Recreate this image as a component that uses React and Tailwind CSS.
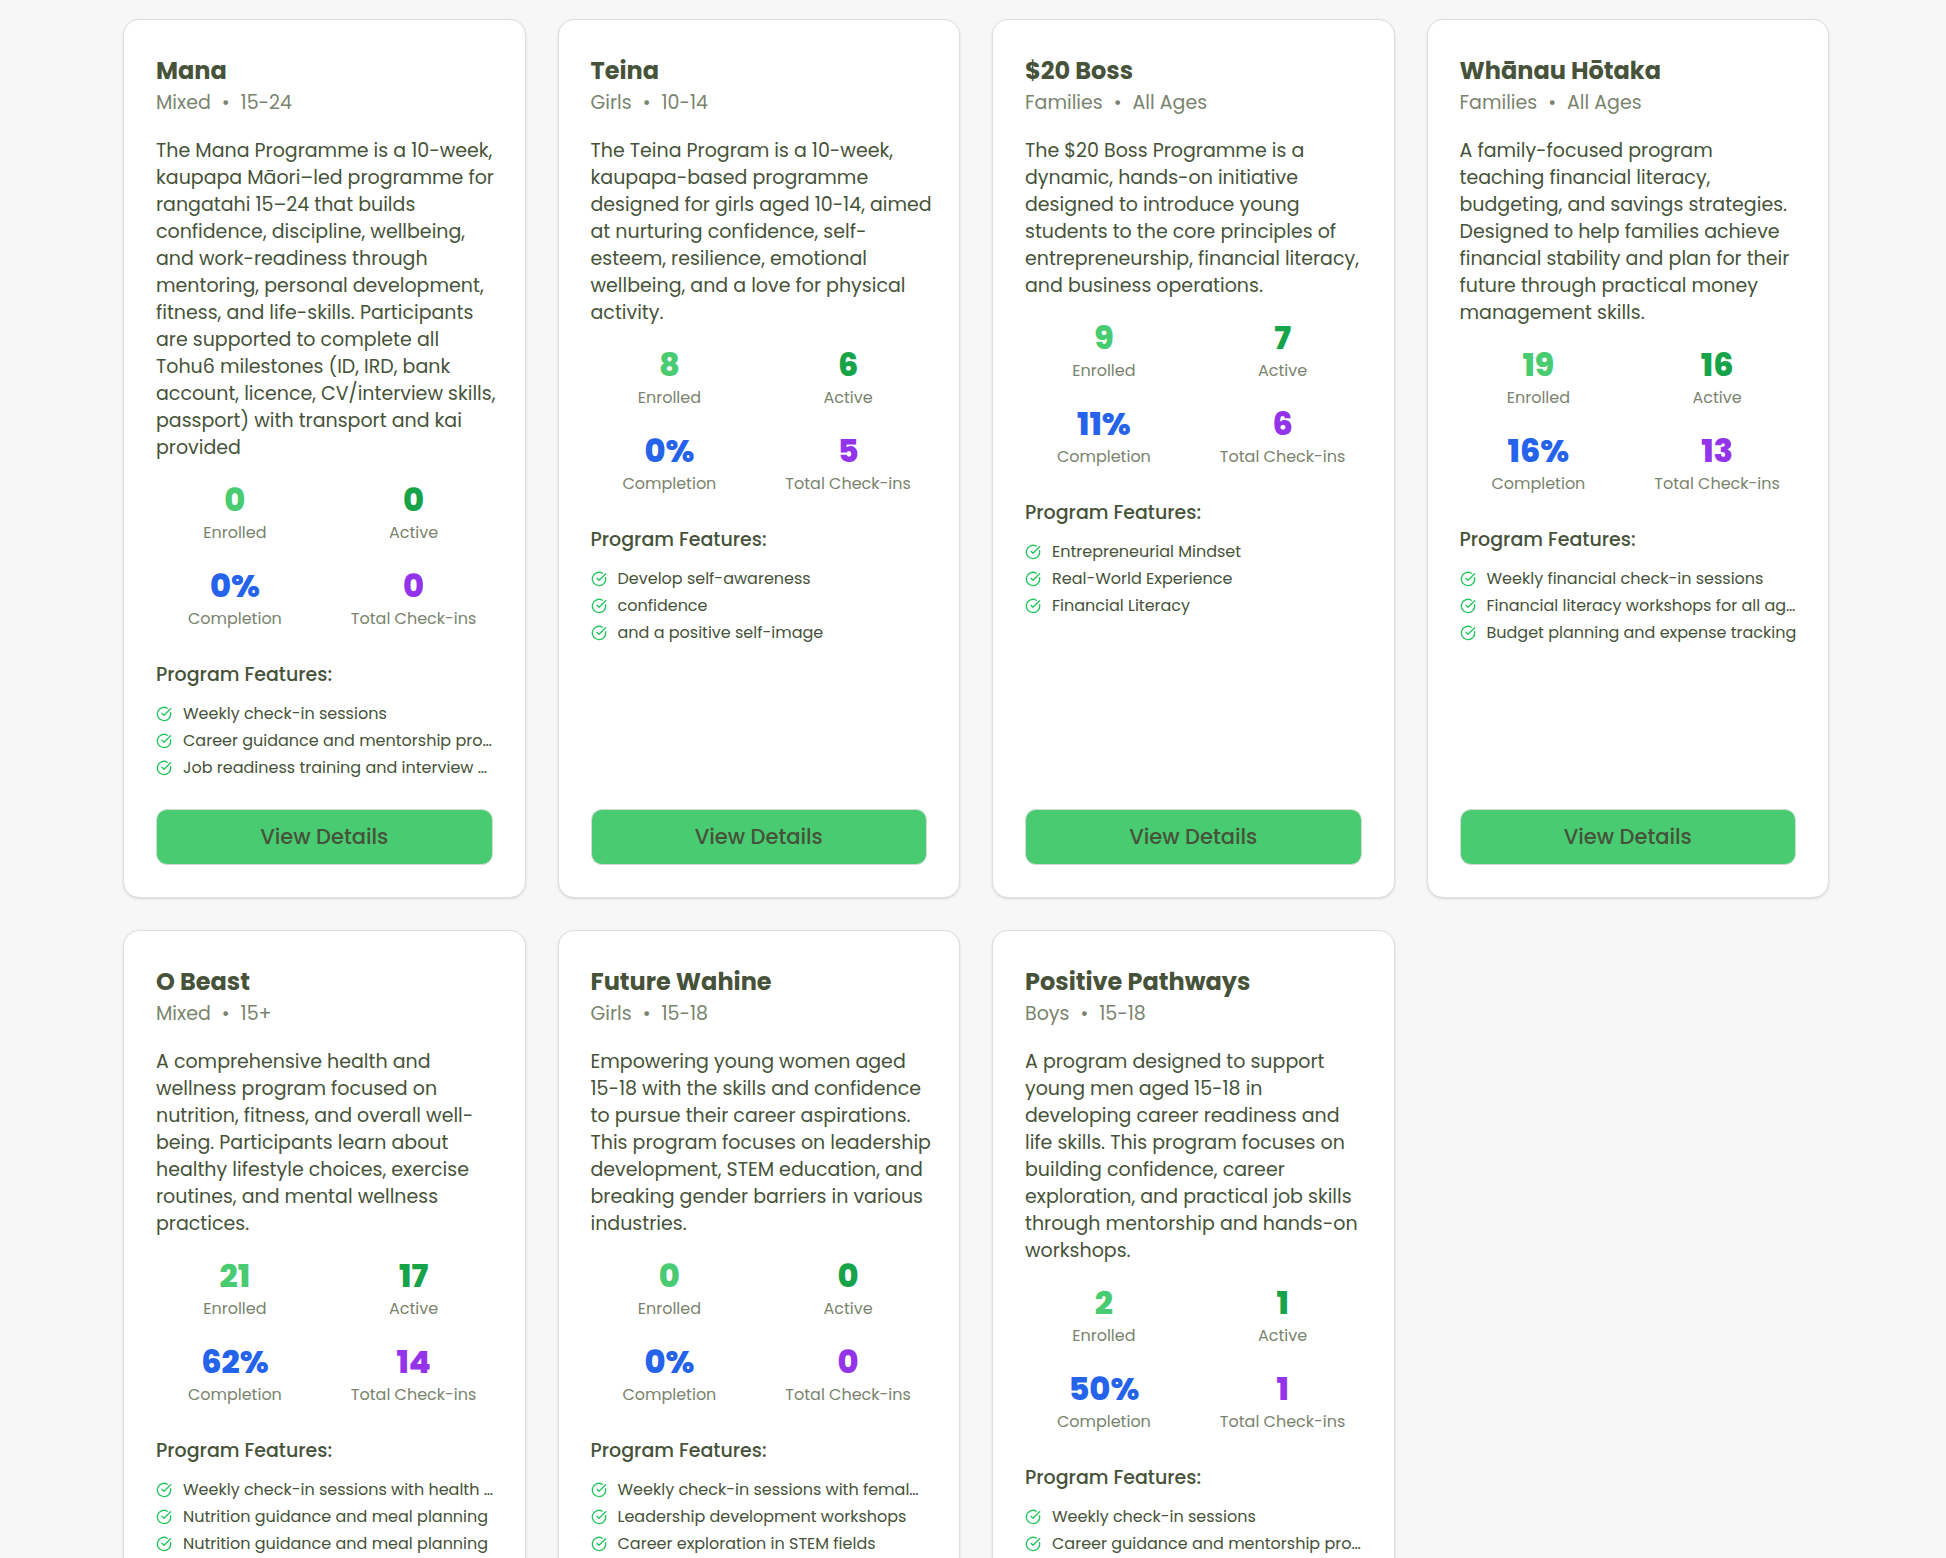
import { CircleCheckBig } from "lucide-react";

const programs = [
  {
    name: "Mana",
    group: "Mixed",
    ages: "15-24",
    description: [
      "The Mana Programme is a 10-week,",
      "kaupapa Māori–led programme for",
      "rangatahi 15–24 that builds",
      "confidence, discipline, wellbeing,",
      "and work-readiness through",
      "mentoring, personal development,",
      "fitness, and life-skills. Participants",
      "are supported to complete all",
      "Tohu6 milestones (ID, IRD, bank",
      "account, licence, CV/interview skills,",
      "passport) with transport and kai",
      "provided",
    ],
    enrolled: 0,
    active: 0,
    completion: 0,
    checkIns: 0,
    features: [
      "Weekly check-in sessions",
      "Career guidance and mentorship pro…",
      "Job readiness training and interview …",
    ],
  },
  {
    name: "Teina",
    group: "Girls",
    ages: "10-14",
    description: [
      "The Teina Program is a 10-week,",
      "kaupapa-based programme",
      "designed for girls aged 10-14, aimed",
      "at nurturing confidence, self-",
      "esteem, resilience, emotional",
      "wellbeing, and a love for physical",
      "activity.",
    ],
    enrolled: 8,
    active: 6,
    completion: 0,
    checkIns: 5,
    features: ["Develop self-awareness", "confidence", "and a positive self-image"],
  },
  {
    name: "$20 Boss",
    group: "Families",
    ages: "All Ages",
    description: [
      "The $20 Boss Programme is a",
      "dynamic, hands-on initiative",
      "designed to introduce young",
      "students to the core principles of",
      "entrepreneurship, financial literacy,",
      "and business operations.",
    ],
    enrolled: 9,
    active: 7,
    completion: 11,
    checkIns: 6,
    features: ["Entrepreneurial Mindset", "Real-World Experience", "Financial Literacy"],
  },
  {
    name: "Whānau Hōtaka",
    group: "Families",
    ages: "All Ages",
    description: [
      "A family-focused program",
      "teaching financial literacy,",
      "budgeting, and savings strategies.",
      "Designed to help families achieve",
      "financial stability and plan for their",
      "future through practical money",
      "management skills.",
    ],
    enrolled: 19,
    active: 16,
    completion: 16,
    checkIns: 13,
    features: [
      "Weekly financial check-in sessions",
      "Financial literacy workshops for all ag…",
      "Budget planning and expense tracking",
    ],
  },
  {
    name: "O Beast",
    group: "Mixed",
    ages: "15+",
    description: [
      "A comprehensive health and",
      "wellness program focused on",
      "nutrition, fitness, and overall well-",
      "being. Participants learn about",
      "healthy lifestyle choices, exercise",
      "routines, and mental wellness",
      "practices.",
    ],
    enrolled: 21,
    active: 17,
    completion: 62,
    checkIns: 14,
    features: [
      "Weekly check-in sessions with health …",
      "Nutrition guidance and meal planning",
      "Nutrition guidance and meal planning",
    ],
  },
  {
    name: "Future Wahine",
    group: "Girls",
    ages: "15-18",
    description: [
      "Empowering young women aged",
      "15-18 with the skills and confidence",
      "to pursue their career aspirations.",
      "This program focuses on leadership",
      "development, STEM education, and",
      "breaking gender barriers in various",
      "industries.",
    ],
    enrolled: 0,
    active: 0,
    completion: 0,
    checkIns: 0,
    features: [
      "Weekly check-in sessions with femal…",
      "Leadership development workshops",
      "Career exploration in STEM fields",
    ],
  },
  {
    name: "Positive Pathways",
    group: "Boys",
    ages: "15-18",
    description: [
      "A program designed to support",
      "young men aged 15-18 in",
      "developing career readiness and",
      "life skills. This program focuses on",
      "building confidence, career",
      "exploration, and practical job skills",
      "through mentorship and hands-on",
      "workshops.",
    ],
    enrolled: 2,
    active: 1,
    completion: 50,
    checkIns: 1,
    features: [
      "Weekly check-in sessions",
      "Career guidance and mentorship pro…",
      "Job readiness training and interview …",
    ],
  },
];

const Stat = ({ value, label, color }) => (
  <div className="text-center">
    <div className={`text-[32px] leading-[44px] font-extrabold ${color}`}>{value}</div>
    <div className="text-base leading-[21px] text-[#7a836e]">{label}</div>
  </div>
);

const ProgramCard = ({ program }) => (
  <article className="flex flex-col bg-white rounded-2xl border border-[#dedfdd] shadow-sm p-8">
    <h3 className="text-2xl leading-[37px] font-bold">{program.name}</h3>
    <div className="flex gap-[11px] text-[19px] leading-[27px] text-[#7a836e]">
      <span>{program.group}</span>
      <span>•</span>
      <span>{program.ages}</span>
    </div>

    <p className="mt-[21px] text-[19px] leading-[27px] whitespace-pre">
      {program.description.join("\n")}
    </p>

    <div className="mt-[17px] grid grid-cols-2 gap-[21px]">
      <Stat value={program.enrolled} label="Enrolled" color="text-[#48cb71]" />
      <Stat value={program.active} label="Active" color="text-[#16a34a]" />
      <Stat value={`${program.completion}%`} label="Completion" color="text-[#2563eb]" />
      <Stat value={program.checkIns} label="Total Check-ins" color="text-[#9333ea]" />
    </div>

    <h4 className="mt-8 text-[19px] leading-[27px] font-medium">Program Features:</h4>
    <ul className="mt-3 mb-7">
      {program.features.map((feature, i) => (
        <li key={i} className="flex items-center gap-[11px] text-base leading-[27px]">
          <CircleCheckBig className="size-4 shrink-0 text-[#22c55e]" />
          <span className="whitespace-nowrap">{feature}</span>
        </li>
      ))}
    </ul>

    <button
      type="button"
      className="mt-auto h-14 w-full shrink-0 rounded-[11px] border border-[#d3dcd3] bg-[#48cb71] text-[21px] font-medium"
    >
      View Details
    </button>
  </article>
);

export default function App() {
  return (
    <main className="h-screen overflow-hidden bg-[#f7f7f7] pt-[19px] pl-[123px] pr-[117px] font-['Poppins','Inter',sans-serif] text-[#465239]">
      <div className="grid grid-cols-1 md:grid-cols-2 xl:grid-cols-4 gap-8">
        {programs.map((program) => (
          <ProgramCard key={program.name} program={program} />
        ))}
      </div>
    </main>
  );
}
